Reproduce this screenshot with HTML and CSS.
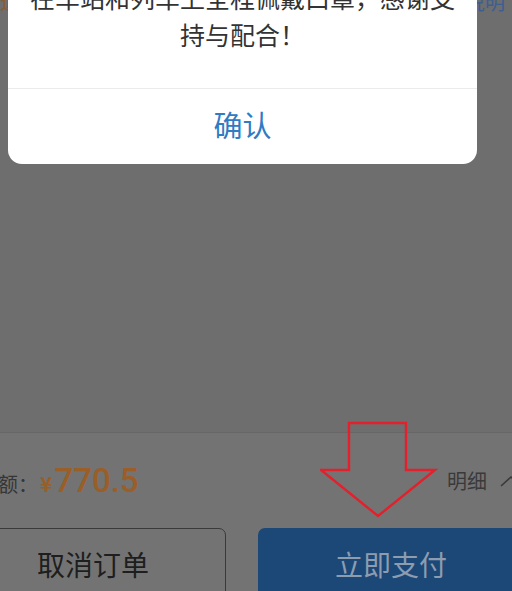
FILE: index.html
```html
<!DOCTYPE html>
<html lang="zh-CN">
<head>
<meta charset="utf-8">
<title>订单支付</title>
<link rel="stylesheet" href="styles.css">
</head>
<body>
<div class="page">
  <header class="top-row">
    <span class="top-left">退</span>
    <span class="top-right">说明</span>
  </header>
  <main class="content"></main>
  <footer class="bottom-bar">
    <div class="price-row">
      <div class="amount">
        <span class="amount-label">订单总额：</span>
        <span class="yen">¥</span><span class="price">770.5</span>
      </div>
      <div class="detail">
        <span>明细</span>
        <svg class="chevron" width="22" height="12" viewBox="0 0 22 12"><path d="M1 11 L11 2 L21 11" fill="none" stroke="#3a3a3a" stroke-width="1.6"/></svg>
      </div>
    </div>
    <div class="btn-row">
      <div class="btn btn-cancel">取消订单</div>
      <div class="btn btn-pay">立即支付</div>
    </div>
  </footer>
</div>

<div class="dialog">
  <div class="dialog-msg">在车站和列车上全程佩戴口罩，感谢支持与配合！</div>
  <div class="dialog-btn">确认</div>
</div>

<svg class="arrow" width="130" height="105" viewBox="0 0 130 105">
  <polygon points="29,2 86,2 86,49 115,49 58,95 1,49 29,49" fill="none" stroke="#e3202c" stroke-width="2.4" stroke-linejoin="miter"/>
</svg>
</body>
</html>
```
FILE: styles.css
```css
html, body {
  margin: 0;
  padding: 0;
  width: 512px;
  height: 591px;
  overflow: hidden;
  background: #6f6f6f;
  font-family: "Noto Sans CJK SC", "Noto Sans", sans-serif;
}

.page {
  width: 512px;
  height: 600px;
  display: flex;
  flex-direction: column;
  background: #6e6e6e;
}

.top-row {
  display: flex;
  justify-content: space-between;
  align-items: center;
  height: 24px;
  margin-top: -10px;
  padding: 0 7px 0 0;
  font-size: 20px;
  line-height: 24px;
}

.top-left {
  display: block;
  width: 8px;
  overflow: hidden;
  white-space: nowrap;
  color: #8a5c34;
}

.top-right {
  color: #3d5e90;
}

.content {
  flex: 1;
}

.bottom-bar {
  height: 167px;
  border-top: 1px solid #676767;
  background: #737373;
  display: flex;
  flex-direction: column;
}

.price-row {
  height: 95px;
  display: flex;
  align-items: center;
  justify-content: space-between;
}

.amount {
  display: flex;
  align-items: baseline;
  margin-left: -62px;
}

.amount-label {
  font-size: 20px;
  color: #363636;
  margin-right: 2px;
}

.yen {
  font-family: "Noto Sans CJK SC", sans-serif;
  font-size: 21px;
  font-weight: 700;
  color: #9a5e28;
  margin-right: 2px;
}

.price {
  font-family: Roboto, "Noto Sans", sans-serif;
  font-size: 33px;
  font-weight: 500;
  color: #9a5e28;
}

.detail {
  display: flex;
  align-items: center;
  gap: 13px;
  margin-right: -10px;
  font-size: 20px;
  color: #3a3a3a;
}

.chevron {
  display: block;
}

.btn-row {
  display: flex;
  gap: 32px;
  margin-left: -40px;
  width: 564px;
}

.btn {
  box-sizing: border-box;
  width: 266px;
  height: 72px;
  border-radius: 7px;
  display: flex;
  align-items: center;
  justify-content: center;
  font-size: 28px;
}

.btn-cancel {
  border: 1.5px solid #3a3a3a;
  color: #1e1e1e;
}

.btn-pay {
  background: #1c4878;
  color: #8d9cae;
}

.dialog {
  position: absolute;
  left: 8px;
  top: -46px;
  width: 469px;
  background: #ffffff;
  border-radius: 14px;
}

.dialog-msg {
  padding: 25px 20px 35px;
  font-size: 25px;
  line-height: 37px;
  color: #333333;
  text-align: center;
  border-bottom: 1px solid #ebebeb;
}

.dialog-btn {
  box-sizing: border-box;
  height: 75px;
  padding-bottom: 6px;
  display: flex;
  align-items: center;
  justify-content: center;
  font-size: 29px;
  color: #2f7bc4;
}

.arrow {
  position: absolute;
  left: 320px;
  top: 421px;
}
```
